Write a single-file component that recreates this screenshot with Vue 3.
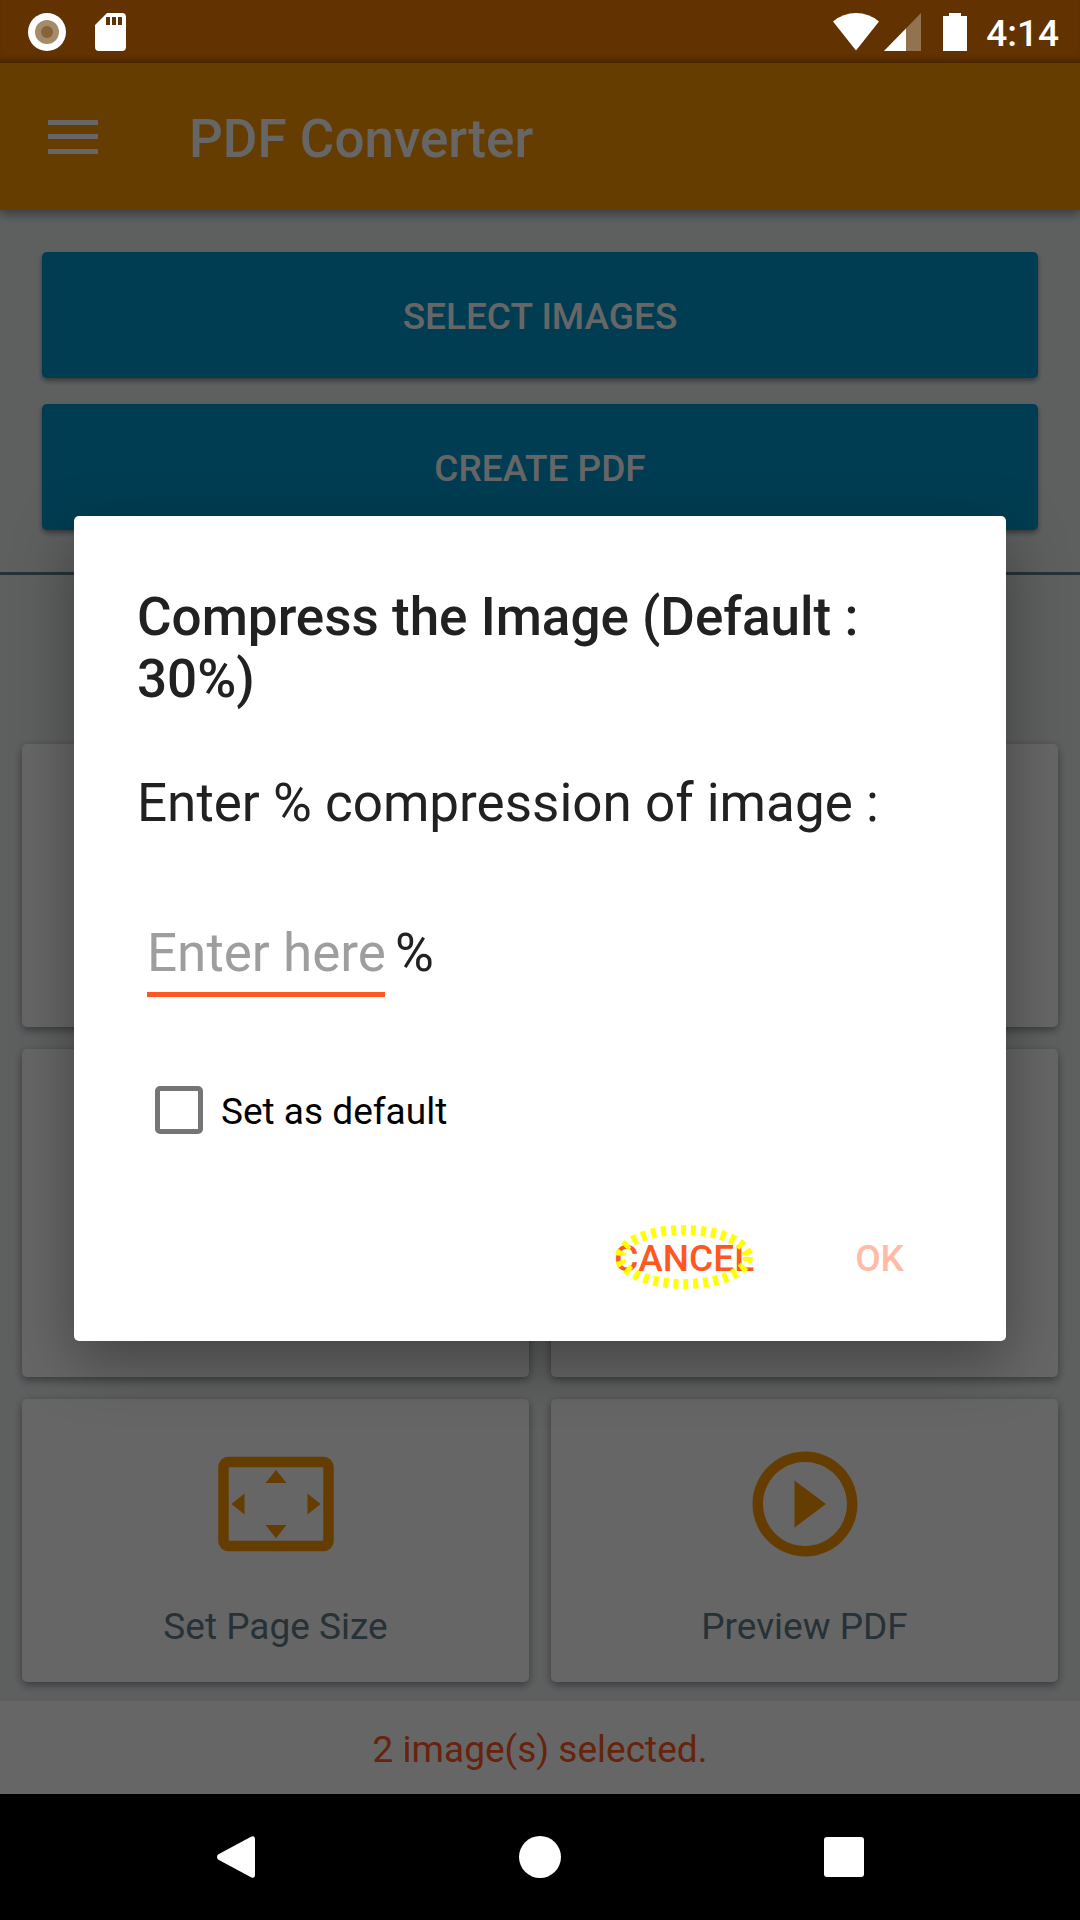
<script setup>
import { ref } from 'vue'

const percent = ref('')
const setDefault = ref(false)

const cards = [
  { id: 'a' },
  { id: 'b' },
  { id: 'c', tall: true },
  { id: 'd', tall: true },
  {
    id: 'size',
    label: 'Set Page Size',
    icon: 'M12.01 5.5L10 8h4l-1.99-2.5zM18 10v4l2.5-1.99L18 10zM6 10l-2.5 2.01L6 14v-4zm8 6h-4l2.01 2.5L14 16zm7-13H3c-1.1 0-2 .9-2 2v14c0 1.1.9 2 2 2h18c1.1 0 2-.9 2-2V5c0-1.1-.9-2-2-2zm0 16.01H3V4.99h18v14.02z',
  },
  {
    id: 'preview',
    label: 'Preview PDF',
    icon: 'M10 16.5l6-4.5-6-4.5v9zM12 2C6.48 2 2 6.48 2 12s4.48 10 10 10 10-4.48 10-10S17.52 2 12 2zm0 18c-4.41 0-8-3.59-8-8s3.59-8 8-8 8 3.59 8 8-3.59 8-8 8z',
  },
]
</script>

<template>
  <div class="phone">
    <header class="status">
      <svg class="camera" width="38" height="38" viewBox="0 0 38 38" aria-hidden="true">
        <circle cx="19" cy="19" r="19" fill="#fff" />
        <circle cx="19" cy="19" r="12" fill="#a58a6c" />
        <circle cx="19" cy="19" r="6" fill="#866339" />
      </svg>
      <svg width="32" height="38" viewBox="0 0 32 38" aria-hidden="true">
        <path
          fill="#fff"
          fill-rule="evenodd"
          d="M12 0H27a4 4 0 0 1 4 4V34a4 4 0 0 1-4 4H4a4 4 0 0 1-4-4V12ZM11 4v8h4V4ZM17 4v8h4V4ZM23 4v8h4V4Z"
        />
      </svg>
      <span class="spacer"></span>
      <svg class="wifi" width="46" height="38" viewBox="0 0 46 38" aria-hidden="true">
        <path fill="#fff" d="M0 8.500Q10 0 23 0T46 8.500L23 37.500Z" />
      </svg>
      <svg class="signal" width="37" height="38" viewBox="0 0 37 38" aria-hidden="true">
        <path fill="#92724f" d="M37 0V38H0Z" />
        <path fill="#fff" d="M22 15.400V38H0Z" />
      </svg>
      <svg class="battery" width="24" height="38" viewBox="0 0 24 38" aria-hidden="true">
        <path fill="#fff" d="M6 0h12v3h6v35H0V3h6Z" />
      </svg>
      <time>4:14</time>
    </header>

    <div class="screen">
      <div class="toolbar">
        <button class="menu" type="button" aria-label="Menu">
          <svg width="50" height="34" viewBox="0 0 50 34">
            <path fill="#fff" d="M0 0h50v5H0zM0 14h50v5H0zM0 29h50v5H0z" />
          </svg>
        </button>
        <h1>PDF Converter</h1>
      </div>

      <main>
        <div class="actions">
          <button type="button">SELECT IMAGES</button>
          <button type="button">CREATE PDF</button>
        </div>
        <div class="grid">
          <div v-for="c in cards" :key="c.id" class="card" :class="{ tall: c.tall }">
            <template v-if="c.label">
              <svg width="126" height="126" viewBox="0 0 24 24" aria-hidden="true">
                <path fill="#ff9800" :d="c.icon" />
              </svg>
              <span>{{ c.label }}</span>
            </template>
          </div>
        </div>
      </main>
      <p class="notice">2 image(s) selected.</p>

      <div class="overlay">
        <form class="dialog" role="dialog" aria-labelledby="dlg-title" @submit.prevent>
          <h2 id="dlg-title">Compress the Image (Default : 30%)</h2>
          <label class="prompt" for="percent">Enter % compression of image :</label>
          <div class="entry">
            <input id="percent" v-model="percent" type="text" inputmode="numeric" placeholder="Enter here" />
            <span>%</span>
          </div>
          <label class="check">
            <input v-model="setDefault" type="checkbox" />
            <span>Set as default</span>
          </label>
          <div class="buttons">
            <button class="cancel" type="button">
              CANCEL
              <svg class="ring" width="140" height="66" viewBox="0 0 140 66" aria-hidden="true">
                <ellipse cx="70" cy="33" rx="64" ry="27" fill="none" stroke="#ff0" stroke-width="10" stroke-dasharray="5 5" />
              </svg>
            </button>
            <button type="submit" disabled>OK</button>
          </div>
        </form>
      </div>
    </div>

    <nav class="navbar">
      <button type="button" aria-label="Back">
        <svg width="42" height="42" viewBox="0 0 42 42">
          <path fill="#fff" d="M3 18.500 36 .800Q40 -1 40 3V39Q40 43 36 41.200L3 23.500Q1 21 3 18.500Z" />
        </svg>
      </button>
      <button type="button" aria-label="Home">
        <svg width="42" height="42" viewBox="0 0 42 42"><circle cx="21" cy="21" r="21" fill="#fff" /></svg>
      </button>
      <button type="button" aria-label="Recent apps">
        <svg width="42" height="42" viewBox="0 0 42 42"><rect x="1" y="1" width="40" height="40" rx="3" fill="#fff" /></svg>
      </button>
    </nav>
  </div>
</template>

<style>
body {
  margin: 0;
  background: #000;
}
</style>

<style scoped>
.phone {
  display: flex;
  flex-direction: column;
  min-height: 100vh;
  font-family: Roboto, 'Liberation Sans', sans-serif;
  font-size: 37px;
  line-height: 44px;
}
button {
  border: 0;
  padding: 0;
  background: none;
  font: inherit;
  color: inherit;
}
svg {
  display: block;
}
h1,
h2,
p {
  margin: 0;
}
.status {
  display: flex;
  align-items: center;
  height: 63px;
  box-sizing: border-box;
  padding: 0 21px 0 28px;
  background: #623200;
  box-shadow: inset 0 -6px 6px -4px rgba(0, 0, 0, 0.25);
  color: #fff;
  font-weight: 500;
}
.camera {
  margin-right: 29px;
}
.spacer {
  flex: 1;
}
.wifi {
  margin-right: 5px;
}
.signal {
  margin-right: 22px;
}
.battery {
  margin-right: 19px;
}
time {
  padding-top: 4px;
}
.screen {
  position: relative;
  flex: 1;
  display: flex;
  flex-direction: column;
  background: #eceff1;
}
.toolbar {
  display: flex;
  align-items: center;
  gap: 91px;
  height: 147px;
  padding-left: 48px;
  background: #ff9800;
  box-shadow: 0 4px 10px rgba(0, 0, 0, 0.4);
  color: #fff;
}
h1 {
  padding-top: 4px;
  font-size: 53px;
  line-height: 62px;
  font-weight: 500;
}
main {
  flex: 1;
}
.actions {
  display: flex;
  flex-direction: column;
  gap: 26px;
  padding: 42px;
  border-bottom: 3px solid #607d8b;
}
.actions button {
  padding: 43px 0 39px;
  border-radius: 5px;
  background: #0099cc;
  box-shadow: 0 3px 5px rgba(0, 0, 0, 0.4);
  color: #fff;
  font-weight: 500;
}
.grid {
  display: grid;
  grid-template-columns: 1fr 1fr;
  gap: 22px;
  padding: 169px 22px 19px;
}
.card {
  display: flex;
  flex-direction: column;
  align-items: center;
  gap: 38px;
  min-height: 283px;
  box-sizing: border-box;
  padding: 42px 0 33px;
  border-radius: 5px;
  background: #fff;
  box-shadow: 0 3px 8px rgba(0, 0, 0, 0.4);
  color: #607d8b;
}
.card.tall {
  min-height: 328px;
}
.notice {
  padding: 27px 0 22px;
  background: #fff;
  color: #ff5722;
  text-align: center;
}
.overlay {
  position: absolute;
  inset: 0;
  display: flex;
  align-items: center;
  padding: 0 74px;
  background: rgba(0, 0, 0, 0.6);
}
.dialog {
  flex: 1;
  padding: 70px 63px 60px;
  border-radius: 5px;
  background: #fff;
  box-shadow: 0 20px 60px rgba(0, 0, 0, 0.35);
  color: #212121;
}
h2 {
  font-size: 53px;
  line-height: 62px;
  font-weight: 500;
}
.prompt {
  display: block;
  margin-top: 62px;
  font-size: 53px;
  line-height: 62px;
}
.entry {
  display: flex;
  gap: 10px;
  margin: 88px 10px 0;
  font-size: 53px;
  line-height: 62px;
}
.entry input {
  width: 238px;
  height: 75px;
  box-sizing: border-box;
  padding: 0 0 8px;
  border: 0;
  border-bottom: 5px solid #ff5722;
  border-radius: 0;
  background: none;
  color: inherit;
  font: inherit;
  outline: none;
}
.entry input::placeholder {
  color: #9e9e9e;
  opacity: 1;
}
.check {
  display: flex;
  align-items: center;
  gap: 18px;
  margin: 89px 18px 0;
  color: #000;
}
.check span {
  padding-top: 4px;
}
.check input {
  appearance: none;
  width: 48px;
  height: 48px;
  margin: 0;
  border: 5px solid #757575;
  border-radius: 5px;
}
.check input:checked {
  background: #ff5722;
}
.buttons {
  display: flex;
  justify-content: flex-end;
  gap: 101px;
  margin-top: 103px;
  padding-right: 39px;
  color: #ff5722;
  font-weight: 500;
}
.buttons button:disabled {
  color: #ffbba6;
}
.cancel {
  position: relative;
}
.ring {
  position: absolute;
  top: 46%;
  left: 50%;
  transform: translate(-50%, -50%);
}
.navbar {
  display: flex;
  height: 126px;
  padding: 0 84px;
  background: #000;
}
.navbar button {
  flex: 1;
  display: flex;
  align-items: center;
  justify-content: center;
}
</style>
